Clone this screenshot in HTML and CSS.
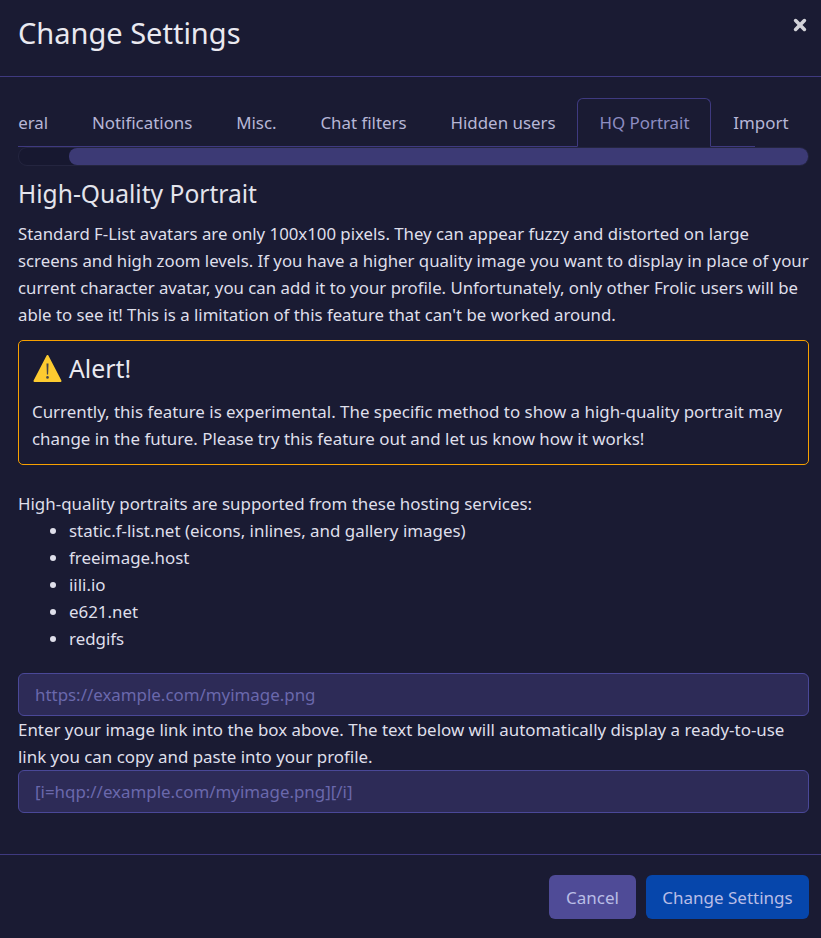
FILE: index.html
```html
<!DOCTYPE html>
<html lang="en">
<head>
  <meta charset="UTF-8">
  <title>Change Settings</title>
  <link rel="stylesheet" href="styles.css">
</head>
<body>
  <div class="modal">
    <header class="modal-header">
      <h1 class="modal-title">Change Settings</h1>
      <button class="close" aria-label="Close">
        <svg width="14" height="14" viewBox="0 0 14 14"><path d="M2.6 2.6L11.4 11.4M11.4 2.6L2.6 11.4" stroke="#d2d2d8" stroke-width="3.6" stroke-linecap="round"/></svg>
      </button>
    </header>

    <main class="modal-body">
      <div class="tabs-scroll">
        <ul class="tabs">
          <li class="tab">General</li>
          <li class="tab">Notifications</li>
          <li class="tab">Misc.</li>
          <li class="tab">Chat filters</li>
          <li class="tab">Hidden users</li>
          <li class="tab active">HQ Portrait</li>
          <li class="tab">Import</li>
        </ul>
      </div>
      <div class="scrollbar"><div class="scrollbar-thumb"></div></div>

      <h4 class="section-title">High-Quality Portrait</h4>
      <p class="intro">Standard F-List avatars are only 100x100 pixels. They can appear fuzzy and distorted on large screens and high zoom levels. If you have a higher quality image you want to display in place of your current character avatar, you can add it to your profile. Unfortunately, only other Frolic users will be able to see it! This is a limitation of this feature that can't be worked around.</p>

      <div class="alert">
        <h4 class="alert-title">
          <svg class="warn-icon" width="30" height="30" viewBox="0 0 30 30">
            <path d="M15.5 2L28.5 27H2.5Z" fill="#fdcb30" stroke="#fdcb30" stroke-width="2" stroke-linejoin="round"/>
            <path d="M14.5 9.5h2l-.4 11h-1.2z" fill="#45454a"/>
            <circle cx="15.5" cy="23.4" r="1.3" fill="#45454a"/>
          </svg>
          <span>Alert!</span>
        </h4>
        <p>Currently, this feature is experimental. The specific method to show a high-quality portrait may change in the future. Please try this feature out and let us know how it works!</p>
      </div>

      <div class="hosts">
        High-quality portraits are supported from these hosting services:
        <ul class="host-list">
          <li>static.f-list.net (eicons, inlines, and gallery images)</li>
          <li>freeimage.host</li>
          <li>iili.io</li>
          <li>e621.net</li>
          <li>redgifs</li>
        </ul>
      </div>

      <input class="field" type="text" placeholder="https://example.com/myimage.png">
      <div class="hint">Enter your image link into the box above. The text below will automatically display a ready-to-use link you can copy and paste into your profile.</div>
      <input class="field" type="text" placeholder="[i=hqp://example.com/myimage.png][/i]">
    </main>

    <footer class="modal-footer">
      <button class="btn btn-cancel">Cancel</button>
      <button class="btn btn-primary">Change Settings</button>
    </footer>
  </div>
</body>
</html>
```

FILE: styles.css
```css
* {
  box-sizing: border-box;
}

body {
  margin: 0;
  background: #1a1b33;
  color: #dfdfea;
  font-family: "Noto Sans", sans-serif;
  font-size: 16.9px;
  line-height: 27px;
}

.modal {
  height: 938px;
  display: flex;
  flex-direction: column;
  overflow: hidden;
}

.modal-header {
  height: 77px;
  padding: 0 12px 0 18px;
  display: flex;
  justify-content: space-between;
  border-bottom: 1px solid #3f3a80;
}

.modal-title {
  margin: 13px 0 0;
  font-size: 29px;
  line-height: 40px;
  font-weight: 400;
  color: #e9e9f0;
}

.close {
  width: 18px;
  height: 18px;
  margin-top: 16px;
  padding: 0;
  border: none;
  background: none;
  display: flex;
  align-items: center;
  justify-content: center;
}

.modal-body {
  flex: 1;
  padding: 21px 12px 0 18px;
}

.tabs-scroll {
  height: 49px;
  overflow: hidden;
}

.tabs {
  list-style: none;
  margin: 0 0 0 -54px;
  padding: 0;
  width: 791px;
  height: 49px;
  display: flex;
  border-bottom: 1px solid #3f3a80;
}

.tab {
  flex: none;
  height: 49px;
  padding: 10px 20.9px 11px;
  border: 1px solid transparent;
  border-radius: 6px 6px 0 0;
  color: #b6b6d6;
}

.tab.active {
  border-color: #3f3a80;
  border-bottom-color: #1a1b33;
  color: #8d8dc2;
}

.scrollbar {
  height: 19px;
  border-radius: 9px;
  background: #171830;
  border: 1px solid #24253f;
}

.scrollbar-thumb {
  height: 17px;
  margin-left: 50px;
  border-radius: 8px;
  background: #3c3a75;
}

.section-title {
  margin: 13px 0 12px;
  font-size: 24.6px;
  line-height: 29px;
  font-weight: 400;
  color: #e4e4ec;
}

.intro {
  margin: 0 0 12px;
  font-size: 16.8px;
}

.alert {
  height: 125px;
  padding: 11px 13px;
  margin-bottom: 25px;
  border: 1px solid #f7a000;
  border-radius: 5px;
}

.alert-title {
  margin: 0 0 13px;
  display: flex;
  align-items: center;
  gap: 7px;
  font-size: 24.8px;
  line-height: 33px;
  font-weight: 400;
  color: #e9e9f0;
}

.alert p {
  margin: 0;
}

.hosts {
  margin-bottom: 21px;
}

.host-list {
  margin: 0;
  padding-left: 51px;
}

.field {
  display: block;
  width: 100%;
  height: 43px;
  padding: 0 16px;
  border: 1px solid #4a4898;
  border-radius: 6px;
  background: #2d2b57;
  font-family: inherit;
  font-size: 16.9px;
}

.field::placeholder {
  color: #6a68ac;
  opacity: 1;
}

.modal-footer {
  height: 84px;
  padding: 20px 12px 0 0;
  display: flex;
  justify-content: flex-end;
  gap: 10px;
  border-top: 1px solid #3f3a80;
}

.btn {
  height: 44px;
  padding: 0;
  border: none;
  border-radius: 6px;
  font-family: inherit;
  font-size: 17px;
  color: #b9bde6;
}

.btn-cancel {
  width: 87px;
  background: #4f4b97;
}

.btn-primary {
  width: 163px;
  background: #0646ab;
}
```
